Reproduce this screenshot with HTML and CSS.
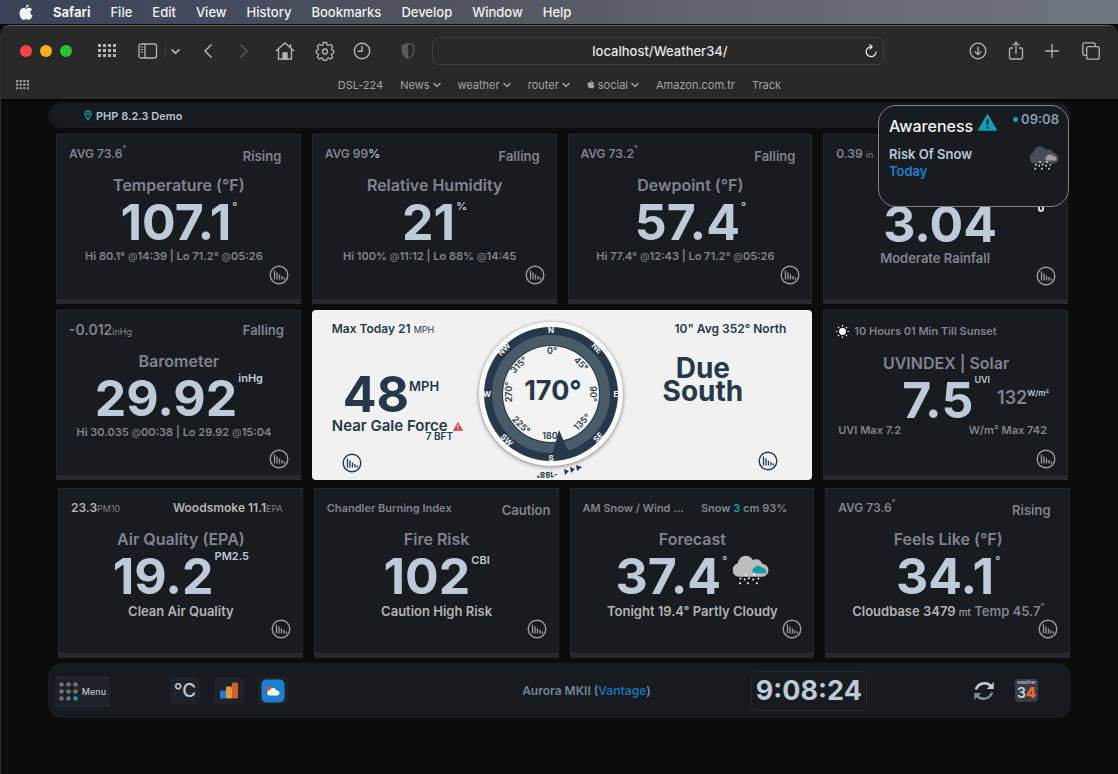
FILE: index.html
```html
<!DOCTYPE html>
<html lang="en">
<head>
<meta charset="utf-8">
<title>Weather34</title>
<link rel="stylesheet" href="styles.css">
</head>
<body>
<svg class="sprites" aria-hidden="true">
  <symbol id="apple" viewBox="0 0 14 17"><path d="M9.600 .5c.1 1.500-1.300 3.200-2.900 3.200C6.500 2.200 8 .6 9.600.5zM7.100 4.700c.7 0 1.700-.9 3-.9 1.200 0 2.300.6 3 1.600-2.500 1.500-2.100 4.900.5 5.900-.6 1.700-2 4.500-3.700 4.500-1 0-1.500-.6-2.700-.6s-1.800.6-2.700.6C2.600 15.800.5 12.300.5 9.200c0-3.200 1.900-5.200 4-5.200 1.100 0 1.900.7 2.600.7z" fill="currentColor"/></symbol>
  <symbol id="dots" viewBox="0 0 18 14"><g fill="currentColor"><path d="M0 0h3v3H0zM5 0h3v3H5zM10 0h3v3h-3zM15 0h3v3h-3zM0 5h3v3H0zM5 5h3v3H5zM10 5h3v3h-3zM15 5h3v3h-3zM0 10h3v3H0zM5 10h3v3H5zM10 10h3v3h-3zM15 10h3v3h-3z"/></g></symbol>
  <symbol id="chev" viewBox="0 0 8 6"><path d="M1 1.500l3 3 3-3" fill="none" stroke="currentColor" stroke-width="1.500" stroke-linecap="round"/></symbol>
  <symbol id="chart" viewBox="0 0 20 20"><circle cx="10" cy="10" r="8.800" fill="none" stroke="currentColor" stroke-width="1.400"/><path d="M5.500 5.500V14.500M8 7.500v7M10.500 9.500v5M13 11v3.500M15.300 12.500v2" stroke="currentColor" stroke-width="1.300"/></symbol>
  <symbol id="cloud" viewBox="0 0 36 28"><path d="M7 20.500a6.700 6.700 0 0 1-.5-13C7 3.500 10 .5 14 .5c3 0 5.500 1.700 6.600 4 4-1.800 8 0 8.900 3.600 3.500.3 6 3 6 6.200 0 3.500-2.800 6.200-6.500 6.200z" fill="currentColor"/><path d="M22.500 17c-3-.3-3-4.300-.4-4.800.8-2.900 6-2.700 7-.4 3 0 5 2.200 4 5.200z" fill="var(--puff)"/><g fill="#f3f3f3"><circle cx="14" cy="18.500" r="1.100"/><circle cx="22" cy="18.500" r="1.100"/><circle cx="9" cy="22" r="1"/><circle cx="13" cy="23" r="1"/><circle cx="17" cy="21.800" r="1"/><circle cx="21" cy="23" r="1"/><circle cx="26" cy="22" r="1"/><circle cx="8.500" cy="26.500" r="1"/><circle cx="16" cy="26.500" r="1"/><circle cx="24.500" cy="26.500" r="1"/></g></symbol>
  <symbol id="warn" viewBox="0 0 20 18"><path d="M10 .8 19.300 17H.7z" fill="currentColor" stroke="currentColor" stroke-width="1.400" stroke-linejoin="round"/><path d="M10 5.500v6M10 13.300v2" stroke="var(--mark)" stroke-width="2"/></symbol>
</svg>

<nav class="menubar" aria-label="Application menu">
  <button class="mb-apple" aria-label="Apple"><svg width="14" height="17"><use href="#apple"/></svg></button>
  <button class="mb-app">Safari</button><button>File</button><button>Edit</button><button>View</button><button>History</button><button>Bookmarks</button><button>Develop</button><button>Window</button><button>Help</button>
</nav>

<div class="browser">
  <header class="chrome">
    <div class="toolbar">
      <div class="lights"><button class="red" aria-label="Close"></button><button class="amber" aria-label="Minimise"></button><button class="green" aria-label="Zoom"></button></div>
      <button class="t-grid" aria-label="Tab groups"><svg width="18" height="14"><use href="#dots"/></svg></button>
      <button class="t-side" aria-label="Sidebar"><svg width="20" height="16" viewBox="0 0 20 16" fill="none" stroke="currentColor" stroke-width="1.300"><rect x="1" y="1" width="17.500" height="14" rx="2"/><path d="M7 1v14"/><path d="M2.800 4h2.400M2.800 6.500h2.400M2.800 9h2.400" stroke-width="1"/></svg></button>
      <button class="t-drop" aria-label="Sidebar options"><svg width="9" height="7"><use href="#chev"/></svg></button>
      <button class="t-back" aria-label="Back"><svg width="12" height="16" viewBox="0 0 12 16"><path d="M9.500 1.500 3 8l6.500 6.500" fill="none" stroke="currentColor" stroke-width="1.500"/></svg></button>
      <button class="t-fwd" aria-label="Forward"><svg width="12" height="16" viewBox="0 0 12 16"><path d="M2.500 1.500 9 8l-6.500 6.500" fill="none" stroke="currentColor" stroke-width="1.500"/></svg></button>
      <button class="t-home" aria-label="Home"><svg width="20" height="20" viewBox="0 0 20 20" fill="none" stroke="currentColor" stroke-width="1.400"><path d="M1 10 10 2l9 8M3.500 8.500V18h13V8.500M15.500 6.500V3"/><path d="M8 18v-6h4v6z" fill="currentColor"/></svg></button>
      <button class="t-gear" aria-label="Settings"><svg width="20" height="20" viewBox="0 0 20 20" fill="none" stroke="currentColor" stroke-width="1.300"><path d="M8.400 1.500h3.200l.5 2.400 1.300.6 2.100-1.300 2.200 2.200-1.300 2.100.6 1.300 1.700.5v2.600l-1.700.6-.6 1.400 1.300 2.100-2.200 2.200-2.100-1.300-1.300.6-.5 2h-3.200l-.5-2-1.300-.6-2.100 1.300L2.300 16l1.300-2.100-.6-1.400-1.700-.6V9.300L3 8.800l.6-1.300-1.300-2.100 2.200-2.200 2.100 1.300 1.300-.6z" stroke-linejoin="round"/><circle cx="10" cy="10.500" r="2.500"/></svg></button>
      <button class="t-clock" aria-label="History"><svg width="18" height="18" viewBox="0 0 18 18" fill="none" stroke="currentColor" stroke-width="1.400"><circle cx="9" cy="9" r="7.700"/><path d="M9 4v5.300H4.500"/></svg></button>
      <button class="t-shield" aria-label="Privacy report"><svg width="14" height="18" viewBox="0 0 14 18"><path d="M7 1.500 1.200 3.500v6c0 3 2.500 5.300 5.800 7 3.300-1.700 5.800-4 5.800-7v-6z" fill="none" stroke="currentColor" stroke-width="1.200"/><path d="M7 1.500v15C3.700 14.800 1.200 12.500 1.200 9.500v-6z" fill="currentColor"/></svg></button>
      <div class="address"><input type="text" value="localhost/Weather34/" aria-label="Address"><button aria-label="Reload"><svg width="14" height="14" viewBox="0 0 14 14" fill="none" stroke="currentColor" stroke-width="1.300"><path d="M7.500 2.800A4.900 4.900 0 1 0 12 7.700M5.500.6 8 2.900 5.700 5.400"/></svg></button></div>
      <div class="tools">
        <button aria-label="Downloads"><svg width="18" height="18" viewBox="0 0 18 18" fill="none" stroke="currentColor" stroke-width="1.300"><circle cx="9" cy="9" r="7.800"/><path d="M9 4.500v8M5.800 9.500 9 12.700l3.200-3.200"/></svg></button>
        <button aria-label="Share"><svg width="16" height="20" viewBox="0 0 16 20" fill="none" stroke="currentColor" stroke-width="1.300"><path d="M5 7H3a1.500 1.500 0 0 0-1.500 1.500v8A1.500 1.500 0 0 0 3 18h10a1.500 1.500 0 0 0 1.500-1.500v-8A1.500 1.500 0 0 0 13 7h-2M8 13V1.500M4.800 4.500 8 1.300l3.200 3.200"/></svg></button>
        <button aria-label="New tab"><svg width="14" height="14" viewBox="0 0 14 14" fill="none" stroke="currentColor" stroke-width="1.300"><path d="M7 0v14M0 7h14"/></svg></button>
        <button aria-label="Tab overview"><svg width="18" height="18" viewBox="0 0 18 18" fill="none" stroke="currentColor" stroke-width="1.300"><rect x="4.700" y="4.700" width="12.500" height="12.500" rx="2"/><path d="M4.700 13.300H2.800a2 2 0 0 1-2-2V2.800a2 2 0 0 1 2-2h8.500a2 2 0 0 1 2 2v1.900"/></svg></button>
      </div>
    </div>
    <nav class="favs" aria-label="Favourites">
      <button aria-label="All favourites"><svg width="13" height="10"><use href="#dots"/></svg></button>
      <div class="links">
        <a href="#">DSL-224</a>
        <a href="#">News <svg width="8" height="6"><use href="#chev"/></svg></a>
        <a href="#">weather <svg width="8" height="6"><use href="#chev"/></svg></a>
        <a href="#">router <svg width="8" height="6"><use href="#chev"/></svg></a>
        <a href="#"><svg width="8" height="9"><use href="#apple"/></svg> social <svg width="8" height="6"><use href="#chev"/></svg></a>
        <a href="#">Amazon.com.tr</a>
        <a href="#">Track</a>
      </div>
    </nav>
  </header>

  <main class="page">
    <div class="topbar"><svg width="8" height="11" viewBox="0 0 8 11"><path d="M4 .8A3 3 0 0 0 1 4c0 2 2 3.500 3 6 1-2.500 3-4 3-6A3 3 0 0 0 4 .8z" fill="none" stroke="#12a0b4" stroke-width="1.200"/><circle cx="4" cy="4" r="1.300" fill="#12a0b4"/></svg><span>PHP 8.2.3 Demo</span></div>

    <div class="grid">
      <section class="card">
        <div class="head"><span>AVG 73.6<sup>°</sup></span><b>Rising</b></div>
        <h2>Temperature (°F)</h2>
        <p class="value">107.1<i class="deg">°</i></p>
        <p class="sub hilo">Hi 80.1° <small>@</small>14:39 | Lo 71.2° <small>@</small>05:26</p>
        <button class="chart" aria-label="Temperature chart"><svg width="20" height="20"><use href="#chart"/></svg></button>
      </section>
      <section class="card">
        <div class="head"><span>AVG 99<em>%</em></span><b>Falling</b></div>
        <h2>Relative Humidity</h2>
        <p class="value">21<i>%</i></p>
        <p class="sub hilo">Hi 100% <small>@</small>11:12 | Lo 88% <small>@</small>14:45</p>
        <button class="chart" aria-label="Humidity chart"><svg width="20" height="20"><use href="#chart"/></svg></button>
      </section>
      <section class="card">
        <div class="head"><span>AVG 73.2<sup>°</sup></span><b>Falling</b></div>
        <h2>Dewpoint (°F)</h2>
        <p class="value">57.4<i class="deg">°</i></p>
        <p class="sub hilo">Hi 77.4° <small>@</small>12:43 | Lo 71.2° <small>@</small>05:26</p>
        <button class="chart" aria-label="Dewpoint chart"><svg width="20" height="20"><use href="#chart"/></svg></button>
      </section>
      <section class="card rain">
        <div class="head"><span>0.39 <small>in</small></span></div>
        <p class="value">3.04</p>
        <p class="sub">Moderate Rainfall</p>
        <button class="chart" aria-label="Rain chart"><svg width="20" height="20"><use href="#chart"/></svg></button>
        <span class="rain-ring"></span>
        <aside class="alert">
          <div class="alert-top"><strong>Awareness</strong><svg class="alert-sign" width="19" height="17"><use href="#warn"/></svg><time><span class="dot"></span>09:08</time></div>
          <div class="alert-body"><p>Risk Of Snow<br><span>Today</span></p><svg class="alert-cloud" width="31" height="24"><use href="#cloud"/></svg></div>
        </aside>
      </section>

      <section class="card low">
        <div class="head"><span class="trend">-0.012<small>inHg</small></span><b>Falling</b></div>
        <h2>Barometer</h2>
        <p class="value">29.92<i class="up">inHg</i></p>
        <p class="sub hilo">Hi 30.035 <small>@</small>00:38 | Lo 29.92 <small>@</small>15:04</p>
        <button class="chart" aria-label="Barometer chart"><svg width="20" height="20"><use href="#chart"/></svg></button>
      </section>

      <section class="wind">
        <div class="speed">
          <p class="wind-head">Max Today 21 <small>MPH</small></p>
          <p class="wind-value">48<i>MPH</i></p>
          <p class="force">Near Gale Force <svg width="10" height="9"><use href="#warn"/></svg></p>
          <p class="bft">7 BFT</p>
          <button class="chart" aria-label="Wind speed chart"><svg width="20" height="20"><use href="#chart"/></svg></button>
        </div>
        <svg class="compass" viewBox="0 0 160 170" role="img" aria-label="Wind direction 170 degrees">
          <circle class="rim" cx="80" cy="84" r="72"/>
          <circle cx="80" cy="84" r="67" fill="#27384a"/>
          <circle cx="80" cy="84" r="54" fill="none" stroke="#4a5b69" stroke-width="10"/>
          <circle cx="80" cy="84" r="48" fill="#f3f3f3"/>
          <g class="deg-marks">
            <text x="81" y="44">0°</text>
            <text transform="translate(110 54) rotate(45)" y="3">45°</text>
            <text transform="translate(122 84) rotate(90)" y="3">90°</text>
            <text transform="translate(111 112) rotate(-45)" y="3">135°</text>
            <text x="79" y="129">180</text>
            <text transform="translate(50 115) rotate(45)" y="3">225°</text>
            <text transform="translate(38 82) rotate(-90)" y="3">270°</text>
            <text transform="translate(48 55) rotate(-45)" y="3">315°</text>
          </g>
          <path d="M88 120 98 143 80 150z" fill="#27384a"/>
          <g class="points">
            <text x="80" y="23">N</text>
            <text transform="translate(126 38) rotate(45)" y="3">NE</text>
            <text x="145" y="87">E</text>
            <text transform="translate(127 127) rotate(-45)" y="3">SE</text>
            <text x="80" y="151">S</text>
            <text transform="translate(36 130) rotate(45)" y="3">SW</text>
            <text x="16" y="87">W</text>
            <text transform="translate(33 39) rotate(-45)" y="3">NW</text>
          </g>
          <text class="heading" x="82" y="90">170°</text>
          <text class="drift" transform="translate(76 165) rotate(178)" y="3">-188°</text>
          <path d="M93 159l5 2-4 4zM99 157l5 2-4 4zM105 155l6 2-5 4z" fill="#27384a"/>
        </svg>
        <div class="bearing">
          <p class="wind-head">10" Avg 352° North</p>
          <p class="dir">Due<br>South</p>
          <button class="chart" aria-label="Wind direction chart"><svg width="20" height="20"><use href="#chart"/></svg></button>
        </div>
      </section>

      <section class="card low uv">
        <div class="head"><span><svg width="13" height="13" viewBox="0 0 13 13"><circle cx="6.500" cy="6.500" r="3.400" fill="#fff"/><path d="M6.500 0v1.500M6.500 11.500V13M0 6.500h1.500M11.500 6.500H13M2 2l1 1M10 10l1 1M2 11l1-1M10 3l1-1" stroke="#fff" stroke-width="1.200"/></svg> 10 Hours 01 Min Till Sunset</span></div>
        <h2>UVINDEX | Solar</h2>
        <div class="uv-row"><p class="value">7.5<i class="up tiny">UVI</i></p><p class="solar">132<sup>W/m²</sup></p></div>
        <p class="sub split"><span>UVI Max 7.2</span><span>W/m² Max 742</span></p>
        <button class="chart" aria-label="UV chart"><svg width="20" height="20"><use href="#chart"/></svg></button>
      </section>
    </div>

    <div class="grid last">
      <section class="card air">
        <div class="head lit"><span>23.3<small>PM10</small></span><span>Woodsmoke 11.1<small>EPA</small></span></div>
        <h2>Air Quality (EPA)</h2>
        <p class="value">19.2<i class="up">PM2.5</i></p>
        <p class="sub state">Clean Air Quality</p>
        <button class="chart" aria-label="Air quality chart"><svg width="20" height="20"><use href="#chart"/></svg></button>
      </section>
      <section class="card fire">
        <div class="head"><span>Chandler Burning Index</span><b>Caution</b></div>
        <h2>Fire Risk</h2>
        <p class="value">102<i>CBI</i></p>
        <p class="sub state">Caution High Risk</p>
        <button class="chart" aria-label="Fire risk chart"><svg width="20" height="20"><use href="#chart"/></svg></button>
      </section>
      <section class="card forecast">
        <div class="head"><span>AM Snow / Wind ...</span><span>Snow <mark>3</mark> cm 93%</span></div>
        <h2>Forecast</h2>
        <p class="value">37.4<i class="deg">°</i><svg class="snow" width="38" height="30"><use href="#cloud"/></svg></p>
        <p class="sub state">Tonight 19.4° Partly Cloudy</p>
        <button class="chart" aria-label="Forecast chart"><svg width="20" height="20"><use href="#chart"/></svg></button>
      </section>
      <section class="card">
        <div class="head"><span>AVG 73.6<sup>°</sup></span><b>Rising</b></div>
        <h2>Feels Like (°F)</h2>
        <p class="value">34.1<i class="deg">°</i></p>
        <p class="sub state">Cloudbase 3479 <small>mt</small> <span class="dim">Temp 45.7<sup>°</sup></span></p>
        <button class="chart" aria-label="Feels like chart"><svg width="20" height="20"><use href="#chart"/></svg></button>
      </section>
    </div>

    <footer class="dock">
      <button class="menu"><svg width="19" height="19" viewBox="0 0 19 19" fill="#74777a"><circle cx="2.500" cy="2.500" r="2.200"/><circle cx="9.500" cy="2.500" r="2.200"/><circle cx="16.500" cy="2.500" r="2.200"/><circle cx="2.500" cy="9.500" r="2.200"/><circle cx="9.500" cy="9.500" r="2.200"/><circle cx="16.500" cy="9.500" r="2.200"/><circle cx="2.500" cy="16.500" r="2.200"/><circle cx="9.500" cy="16.500" r="2.200"/><circle cx="16.500" cy="16.500" r="2.200" fill="#12a0b4"/></svg>Menu</button>
      <div class="tiles">
        <button class="tile unit">°C</button>
        <button class="tile" aria-label="Charts"><svg width="18" height="17" viewBox="0 0 18 17"><rect x="0" y="8.500" width="6" height="8" rx="1.200" fill="#1c80d0"/><rect x="6" y="4.500" width="6" height="12" rx="1.200" fill="#e29b37"/><rect x="12" y=".5" width="6" height="16" rx="1.200" fill="#d05f2d"/></svg></button>
        <button class="tile" aria-label="Forecast"><svg width="24" height="24" viewBox="0 0 24 24"><rect x=".5" y=".5" width="23" height="23" rx="5" fill="#1c80d0"/><circle cx="8.500" cy="10.500" r="3" fill="#d9542b"/><path d="M9 16.500a2.600 2.600 0 0 1 0-5.200c.8-3.200 5.400-3 6 0 4.500-.2 4.500 5.200.8 5.200z" fill="#fff"/></svg></button>
      </div>
      <p class="station">Aurora MKII (<a href="#">Vantage</a>)</p>
      <time class="clock">9:08:24</time>
      <div class="right">
        <button class="refresh" aria-label="Refresh"><svg width="20" height="20" viewBox="0 0 20 20" fill="none" stroke-width="2.600"><path d="M2 8.500C4 1.500 13 .5 16.500 5" stroke="#c3ced8"/><path d="M19.700 1v7h-7z" fill="#c3ced8"/><path d="M18 11.500C16 18.500 7 19.500 3.500 15" stroke="#7f8b95"/><path d="M.3 19v-7h7z" fill="#7f8b95"/></svg></button>
        <a class="logo" href="#"><small>weather</small><span>3<b>4</b></span></a>
      </div>
    </footer>
  </main>
</div>
</body>
</html>
```
FILE: styles.css
```css
:root { --puff: #139bae; --mark: #181b20; }
* { box-sizing: border-box; }
body { margin: 0; background: #0c0c0c; font-family: Inter, "Noto Sans", sans-serif; color: #82848f; font-size: 12px; }
p, h2 { margin: 0; }
button { font: inherit; color: inherit; background: none; border: 0; padding: 0; display: flex; align-items: center; justify-content: center; }
a { color: inherit; text-decoration: none; }
svg { display: block; flex: none; }
i, em { font-style: normal; }
small { line-height: 1; }
.sprites { position: absolute; width: 0; height: 0; }

.menubar { display: flex; align-items: center; gap: 20px; height: 24px; padding: 0 19px; background: linear-gradient(90deg, #3b4358, #50545f 40%, #63656f 65%, #6f757e); color: #f1f2f4; font-size: 13px; font-weight: 500; }
.menubar .mb-app { font-weight: 700; }

.browser { margin-top: 1px; min-height: calc(100vh - 25px); border: 1px solid #303030; border-top-color: #606060; border-width: 1px 0 0 1px; border-radius: 10px 10px 0 0; overflow: hidden; background: #0c0c0c; }
.chrome { background: #292929; border-bottom: 1px solid #000; color: #b4b4b4; }
.toolbar { display: flex; align-items: center; height: 50px; padding: 0 18px 0 19px; }
.lights { display: flex; gap: 8px; }
.lights button { width: 12px; height: 12px; border-radius: 50%; }
.red { background: #fc4646; }
.amber { background: #fdae24; }
.green { background: #28c331; }
.t-grid { margin-left: 26px; }
.t-side { margin-left: 22px; }
.t-drop { margin-left: 7px; padding-left: 5px; height: 18px; border-left: 1px solid #3a3a3a; }
.t-back { margin-left: 22px; }
.t-fwd { margin-left: 24px; color: #555; }
.t-home { margin-left: 25px; }
.t-gear { margin-left: 20px; }
.t-clock { margin-left: 18px; }
.t-shield { margin-left: 30px; color: #5a5a5a; }
.address { flex: 1; display: flex; align-items: center; margin: 0 85px 0 17px; height: 28px; padding: 0 5px 0 23px; border: 1px solid #3e3e3e; border-radius: 7px; color: #e6e6e6; }
.address input { flex: 1; min-width: 0; border: 0; padding: 0; background: none; color: inherit; font: 500 13px Inter, sans-serif; text-align: center; outline: 0; }
.tools { display: flex; align-items: center; gap: 21px; }
.tools button:last-child { margin-left: 2px; }
.favs { display: flex; align-items: center; height: 23px; padding: 0 28px 6px 15px; color: #a4a4a4; font-size: 11px; }
.links { flex: 1; display: flex; justify-content: center; gap: 17px; }
.links a { display: flex; align-items: center; gap: 3px; line-height: 16px; }

.page { padding: 3px 47px 0; }
.topbar { display: flex; align-items: center; gap: 4px; height: 25px; padding-left: 36px; border-radius: 13px; background: #171a1f; color: #b8c4d2; font-size: 11px; font-weight: 600; }
.grid { display: grid; grid-template-columns: repeat(4, minmax(0, 1fr)); gap: 6px 11px; padding: 6px 3px 0 8px; }
.grid.last { padding: 8px 1px 0 10px; }

.card { position: relative; min-width: 0; padding: 9px 11px 14px 12px; border: 1px solid #26282d; border-bottom: 5px solid #27292e; background: #181b20; display: flex; flex-direction: column; }
.head { display: flex; justify-content: space-between; height: 24px; line-height: 20px; font-size: 12px; font-weight: 600; white-space: nowrap; }
.head b { min-width: 46px; font-size: 13px; font-weight: 600; line-height: 24px; }
.head sup { font-size: 8px; line-height: 8px; vertical-align: top; }
.head em { font-size: 12px; color: #b5b7bc; }
.head small { font-size: 9px; font-weight: 400; }
.card h2 { margin-top: 6px; font-size: 16px; font-weight: 600; line-height: 22px; text-align: center; white-space: nowrap; }
.value { display: flex; justify-content: center; margin-top: 2px; font-size: 50px; font-weight: 700; line-height: 48px; color: #becad8; }
.value i { margin: 2px 0 0 1px; font-size: 11px; font-weight: 600; line-height: 12px; }
.value .up { margin-top: -2px; }
.value .tiny { font-size: 9px; }
.sub { margin-top: 1px; font-size: 11px; font-weight: 600; line-height: 18px; text-align: center; white-space: nowrap; }
.sub small { font-size: 10px; font-weight: 400; }
.hilo { padding-right: 10px; }
.state { font-size: 13px; color: #b4b4b4; }
.chart { align-self: flex-end; width: 20px; height: 20px; color: #9c9d9f; }
.low { padding-bottom: 6px; }
.low .chart { margin-top: 8px; }
.low .head b { line-height: 20px; }
.trend { font-size: 14px; }

.rain { padding-bottom: 13px; }
.rain .value { margin-top: 32px; padding-right: 12px; }
.rain .sub { padding-right: 22px; font-size: 13px; }
.rain .chart { margin-top: -1px; }
.rain-ring { position: absolute; top: 69px; right: 23px; width: 6px; height: 8px; border: 2px solid #ddd; border-radius: 3px; }
.alert { --puff: #a49a98; position: absolute; top: -30px; right: -2px; width: 191px; height: 102px; padding: 4px 9px 4px 10px; border: 1px solid #85868a; border-radius: 18px; background: #181b20; z-index: 2; }
.alert-top { display: flex; align-items: flex-start; color: #8b9cb8; }
.alert-top strong { padding-top: 5px; color: #f2f2f2; font-size: 16px; font-weight: 500; line-height: 22px; }
.alert-sign { margin: 4px 0 0 5px; color: #129fb4; }
.alert-top time { display: flex; align-items: center; gap: 3px; margin-left: auto; font-size: 13px; font-weight: 600; line-height: 18px; }
.dot { width: 5px; height: 5px; border-radius: 50%; background: #129fb4; }
.alert-body { display: flex; justify-content: space-between; padding-top: 9px; }
.alert-body p { color: #becad8; font-size: 13px; font-weight: 600; line-height: 17px; }
.alert-body span { color: #1c80d0; }
.alert-cloud { color: #454d57; }

.wind { grid-column: span 2; display: grid; grid-template-columns: minmax(0, 160fr) 160px minmax(0, 182fr); background: #f1f1f1; border-radius: 4px; color: #27384a; }
.wind .chart { color: #27384a; }
.wind-head { font-size: 12px; font-weight: 600; line-height: 18px; }
.wind-head small { font-size: 9px; font-weight: 400; }
.speed { display: flex; flex-direction: column; padding: 10px 0 0 20px; white-space: nowrap; }
.wind-value { display: flex; margin: 32px 0 0 11px; font-size: 50px; font-weight: 700; line-height: 48px; }
.wind-value i { margin-top: 7px; font-size: 13px; font-weight: 600; line-height: 18px; }
.force { --mark: #f1f1f1; display: flex; align-items: center; gap: 5px; font-size: 15px; font-weight: 600; line-height: 16px; }
.force svg { color: #cf4a3e; }
.bft { margin-top: -3px; padding-left: 94px; font-size: 10px; font-weight: 600; line-height: 10px; }
.speed .chart { align-self: flex-start; margin: 12px 0 0 10px; }
.compass { width: 160px; height: 170px; font-weight: 700; text-anchor: middle; }
.rim { fill: #fbfbfb; filter: drop-shadow(0 1px 2px #0007); }
.deg-marks { font-size: 9px; fill: #27384a; font-weight: 600; }
.points { font-size: 8px; fill: #f3f3f3; }
.heading { font-size: 27px; fill: #27384a; }
.drift { font-size: 8px; fill: #27384a; }
.bearing { display: flex; flex-direction: column; padding: 10px 26px 0 0; text-align: right; }
.dir { margin: 19px 43px 0 0; font-size: 28px; font-weight: 700; line-height: 23px; text-align: center; align-self: flex-end; }
.bearing .chart { margin: 48px 8px 0 0; }

.uv .head { font-size: 11px; }
.uv .head span { display: flex; align-items: center; gap: 5px; height: 22px; }
.uv h2 { margin-top: 8px; }
.uv-row { display: grid; grid-template-columns: 1fr auto 1fr; column-gap: 7px; }
.uv-row .value { grid-column: 2; }
.solar { display: flex; padding-top: 14px; font-size: 18px; font-weight: 600; line-height: 20px; }
.solar sup { font-size: 8px; line-height: 10px; color: #becad8; vertical-align: top; }
.uv .sub { margin-top: -3px; }
.split { display: flex; justify-content: space-between; padding: 0 9px 0 2px; }
.uv .chart { margin-top: 10px; }

.lit { padding-right: 8px; color: #b4b4b4; }
.lit small { color: #82848f; }
.fire .head, .forecast .head { font-size: 11px; }
.fire .head b { margin-right: -4px; }
.forecast .head { padding-right: 15px; }
mark { background: none; color: #129fb4; }
.last .state { margin-top: 2px; }
.last .chart { margin-top: -1px; }
.state sup { font-size: 8px; line-height: 8px; vertical-align: top; }
.dim { color: #82848f; }
.snow { margin: 3px 0 0 4px; color: #bdbdbd; }

.dock { display: grid; grid-template-columns: 115px auto 234fr auto 100fr auto 107fr auto; align-items: center; margin-top: 5px; height: 55px; padding: 0 33px 0 7px; border-radius: 14px; background: #171a1f; }
.menu { justify-self: start; gap: 4px; width: 55px; height: 28px; border-top: 1px solid #303238; border-radius: 4px; background: #1f2229; color: #b8c0ca; font-size: 9px; font-weight: 500; box-shadow: 0 2px 2px #1d2a38; }
.tiles { display: flex; gap: 14px; }
.tile { width: 30px; height: 27px; border-radius: 4px; background: #1f2229; color: #becad8; }
.unit { font-size: 19px; font-weight: 500; }
.station { grid-column: 4; color: #72859b; font-weight: 600; }
.station a { color: #1c6fb0; }
.clock { grid-column: 6; padding: 0 4px; border: 1px solid #24272c; border-radius: 5px; font-size: 27px; font-weight: 700; line-height: 38px; color: #becad8; }
.right { grid-column: 8; display: flex; align-items: center; gap: 21px; }
.logo { display: flex; flex-direction: column; align-items: center; width: 23px; height: 23px; border-radius: 4px; background: #3a3c4a; color: #c9d4df; }
.logo small { font-size: 5px; line-height: 7px; }
.logo span { font-size: 14px; font-weight: 600; line-height: 14px; }
.logo b { color: #ee6b2b; }
```
